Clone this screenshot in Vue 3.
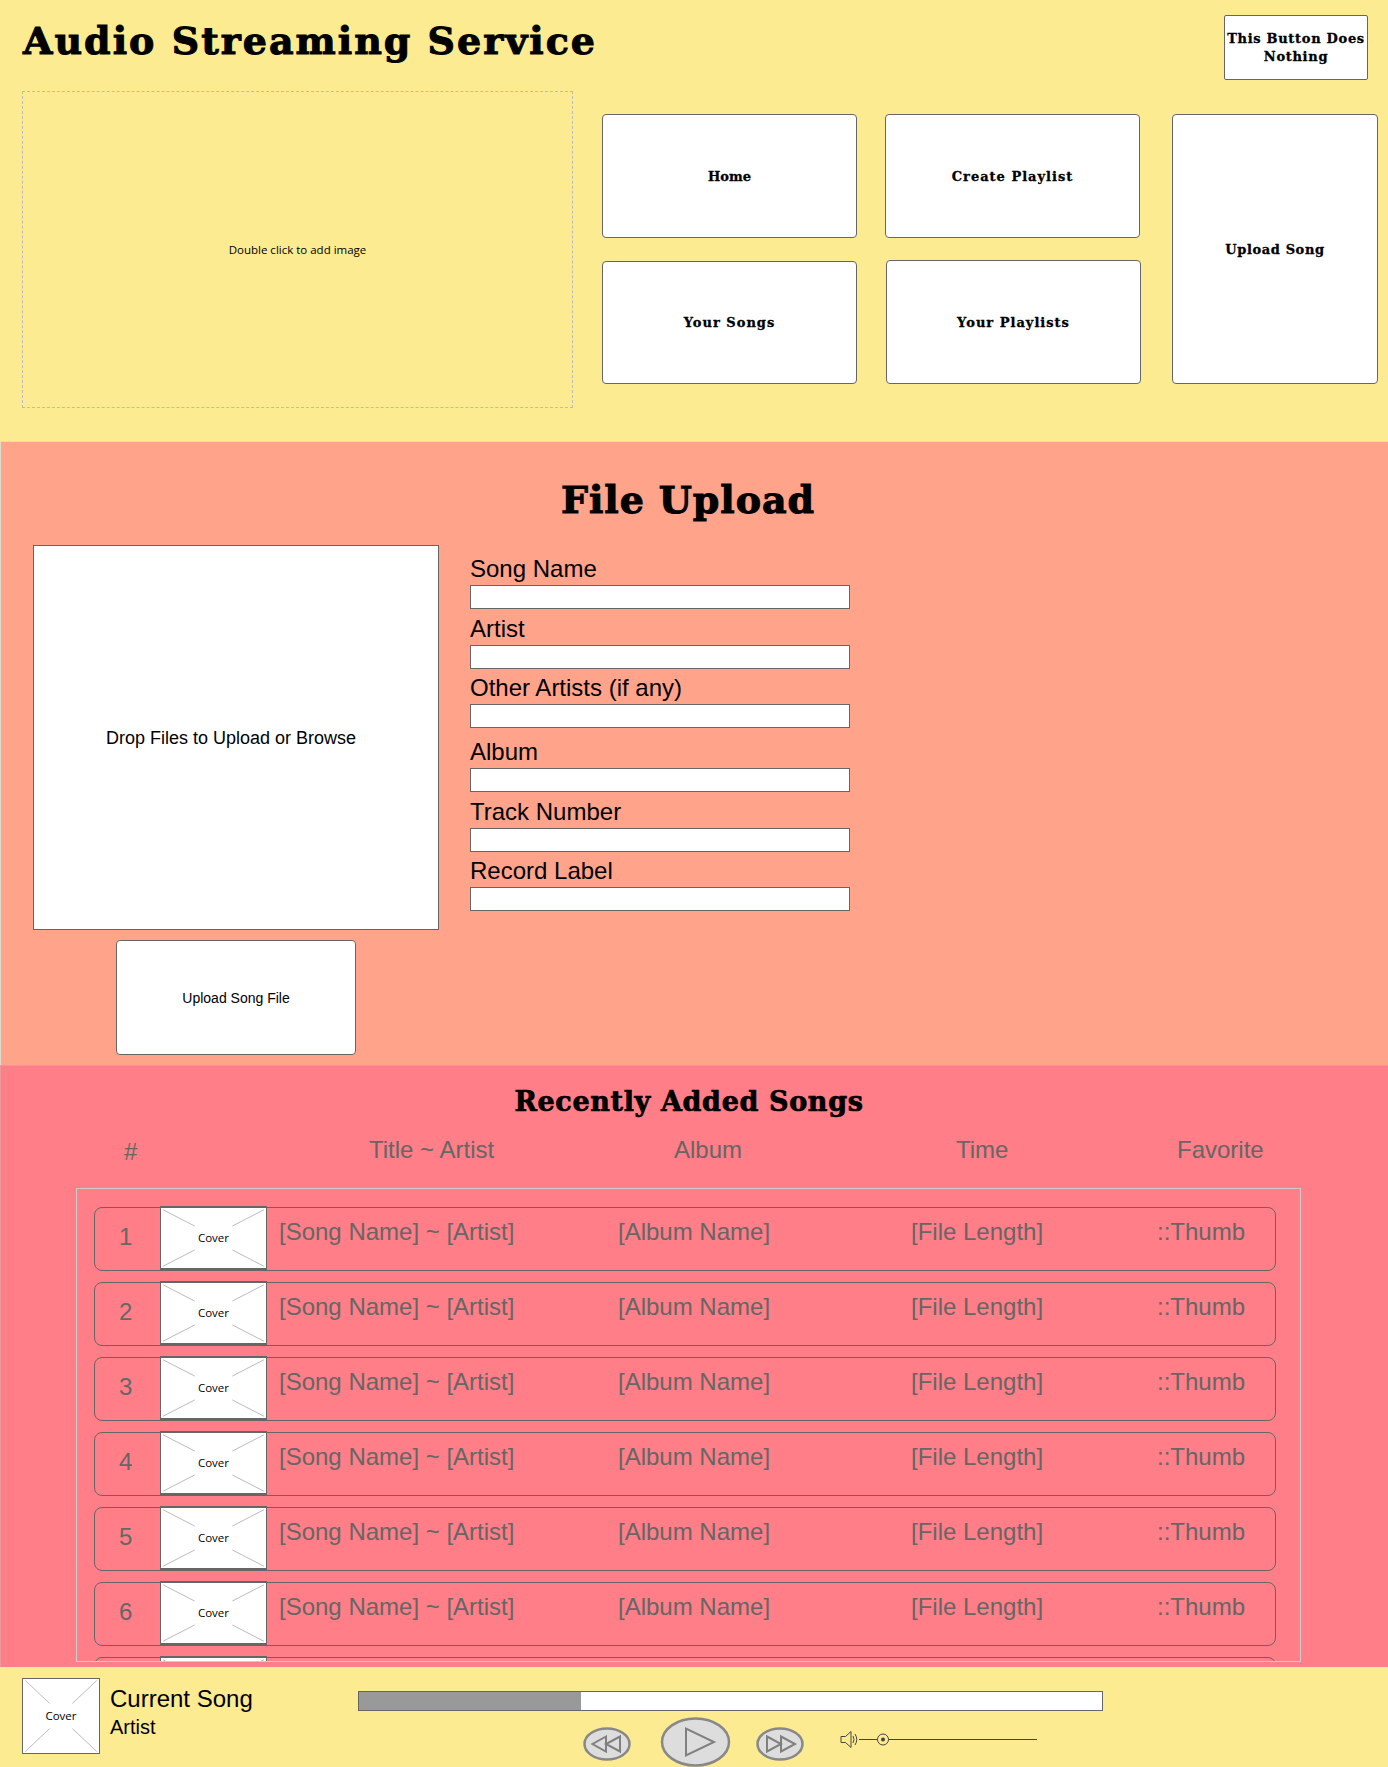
<script setup>
const navItems = [
  { label: 'Home', cls: 'nav-home' },
  { label: 'Create Playlist', cls: 'nav-create' },
  { label: 'Upload Song', cls: 'nav-upload' },
  { label: 'Your Songs', cls: 'nav-songs' },
  { label: 'Your Playlists', cls: 'nav-playlists' },
]

// gap is the space above each label, the form's rows are not evenly spaced
const fields = [
  { label: 'Song Name', gap: 10 },
  { label: 'Artist', gap: 6 },
  { label: 'Other Artists (if any)', gap: 5 },
  { label: 'Album', gap: 10 },
  { label: 'Track Number', gap: 6 },
  { label: 'Record Label', gap: 5 },
]

const rows = [1, 2, 3, 4, 5, 6, 7]
</script>

<template>
  <div class="page">
    <header class="top">
      <div class="top-bar">
        <h1 class="site-title">Audio Streaming Service</h1>
        <button class="idle-btn">This Button Does Nothing</button>
      </div>
      <div class="top-main">
        <div class="image-slot">Double click to add image</div>
        <nav class="nav-grid">
          <button v-for="item in navItems" :key="item.label" class="nav-btn" :class="item.cls">
            {{ item.label }}
          </button>
        </nav>
      </div>
    </header>

    <section class="upload">
      <h2 class="upload-title">File Upload</h2>
      <div class="upload-body">
        <div class="upload-left">
          <div class="dropzone"><span>Drop Files to Upload or Browse</span></div>
          <button class="upload-btn">Upload Song File</button>
        </div>
        <form class="upload-form">
          <div v-for="f in fields" :key="f.label" class="field" :style="{ marginTop: f.gap + 'px' }">
            <label class="field-label">{{ f.label }}</label>
            <input class="field-input" type="text" />
          </div>
        </form>
      </div>
    </section>

    <section class="recent">
      <h2 class="recent-title">Recently Added Songs</h2>
      <div class="cols">
        <span class="col-num">#</span>
        <span class="col-title">Title ~ Artist</span>
        <span class="col-album">Album</span>
        <span class="col-time">Time</span>
        <span>Favorite</span>
      </div>
      <div class="song-list">
        <div v-for="n in rows" :key="n" class="song-row">
          <span class="song-num">{{ n }}</span>
          <div class="cover song-cover">
            <svg class="cover-x" viewBox="0 0 100 100" preserveAspectRatio="none">
              <path d="M2 3L32 30M98 3L68 30M2 97L32 70M98 97L68 70" />
            </svg>
            <span>Cover</span>
          </div>
          <span class="song-text song-name">[Song Name] ~ [Artist]</span>
          <span class="song-text">[Album Name]</span>
          <span class="song-text">[File Length]</span>
          <span class="song-text">::Thumb</span>
        </div>
      </div>
    </section>

    <footer class="player">
      <div class="cover player-cover">
        <svg class="cover-x" viewBox="0 0 100 100" preserveAspectRatio="none">
          <path d="M3 2L35 33M97 2L65 33M3 98L35 67M97 98L65 67" />
        </svg>
        <span>Cover</span>
      </div>
      <div class="now-playing">
        <div class="now-song">Current Song</div>
        <div class="now-artist">Artist</div>
      </div>
      <div class="transport">
        <div class="progress"><div class="progress-fill"></div></div>
        <div class="controls">
          <svg class="ctl ctl-rew" width="48" height="34" viewBox="0 0 48 34">
            <ellipse cx="24" cy="17" rx="22.5" ry="15.5" />
            <path d="M23 9.5L9.5 17L23 24.5ZM37 9.5L23 17L37 24.5Z" />
          </svg>
          <svg class="ctl ctl-play" width="71" height="50" viewBox="0 0 71 50">
            <ellipse cx="35.5" cy="25" rx="33.5" ry="23.5" />
            <path d="M26 11.5V38.5L54 25Z" />
          </svg>
          <svg class="ctl ctl-ff" width="48" height="34" viewBox="0 0 48 34">
            <ellipse cx="24" cy="17" rx="22.5" ry="15.5" />
            <path d="M11 9.5L25 17L11 24.5ZM25 9.5L39 17L25 24.5Z" />
          </svg>
          <svg class="volume" width="198" height="24" viewBox="0 0 198 24">
            <path d="M1 8.5H5.5L11 3.5V19.5L5.5 14.5H1Z" />
            <path d="M13 8Q15 11.5 13 15M15 6Q18.5 11.5 15 17" />
            <path d="M19 11.5H197" />
            <circle class="knob" cx="43" cy="11.5" r="5.5" />
            <circle class="knob-dot" cx="43" cy="11.5" r="2" />
          </svg>
        </div>
      </div>
    </footer>
  </div>
</template>

<style>
html, body {
  margin: 0;
  overflow: hidden;
}
</style>

<style scoped>
.page {
  width: 1388px;
  height: 1767px;
  overflow: hidden;
  font-family: "Liberation Sans", Arial, sans-serif;
  color: #000;
}

button {
  background: #fff;
  border: 1px solid #666;
  border-radius: 4px;
  padding: 0;
  color: #000;
  box-sizing: border-box;
}

/* display face stand-in */
.site-title,
.upload-title,
.recent-title,
.idle-btn,
.nav-btn {
  font-family: "DejaVu Serif", serif;
  font-weight: 700;
  margin: 0;
}

/* Header */
.top {
  height: 441px;
  box-sizing: border-box;
  background: #fdeb92;
  padding-left: 22px;
}
.top-bar {
  height: 91px;
  box-sizing: border-box;
  padding: 15px 20px 0 0;
  display: flex;
  justify-content: space-between;
  align-items: flex-start;
}
.site-title {
  margin-left: 1px;
  font-size: 38px;
  line-height: 52px;
  letter-spacing: 2px;
  -webkit-text-stroke: 1px #000;
}
.idle-btn {
  width: 144px;
  height: 65px;
  border-radius: 2px;
  font-size: 13px;
  line-height: 18px;
  letter-spacing: 0.7px;
  -webkit-text-stroke: 0.3px #000;
}
.top-main {
  display: flex;
}
.image-slot {
  width: 551px;
  height: 317px;
  box-sizing: border-box;
  border: 1px dashed #bbb;
  display: flex;
  align-items: center;
  justify-content: center;
  font-family: "Open Sans", sans-serif;
  font-size: 11.5px;
}
.nav-grid {
  margin: 23px 0 0 29px;
  display: grid;
  grid-template-columns: 255px 255px 206px;
  grid-template-rows: 124px 123px;
  row-gap: 23px;
}
.nav-btn {
  font-size: 13px;
  letter-spacing: 1px;
  -webkit-text-stroke: 0.3px #000;
}
.nav-home {
  letter-spacing: 0;
}
.nav-create {
  margin-left: 28px;
  margin-right: -28px;
}
.nav-upload {
  grid-column: 3;
  grid-row: 1 / span 2;
  margin-left: 60px;
  margin-right: -60px;
  letter-spacing: 0.6px;
}
.nav-songs {
  grid-column: 1;
  grid-row: 2;
}
.nav-playlists {
  grid-column: 2;
  grid-row: 2;
  margin: -1px -29px 0 29px;
}

/* Upload */
.upload {
  height: 624px;
  box-sizing: border-box;
  background: #ffa38b;
  border: 1px solid #ddc;
  border-width: 1px 0 0 1px;
  padding-left: 32px;
}
.upload-title {
  margin: 32px 0 0 0;
  width: 1310px;
  text-align: center;
  font-size: 38px;
  line-height: 52px;
  letter-spacing: 0.9px;
  -webkit-text-stroke: 1px #000;
}
.upload-body {
  display: flex;
  margin-top: 19px;
}
.upload-left {
  width: 406px;
  display: flex;
  flex-direction: column;
  align-items: center;
}
.dropzone {
  width: 100%;
  height: 385px;
  box-sizing: border-box;
  background: #fff;
  border: 1px solid #666;
  display: flex;
  align-items: center;
  justify-content: center;
  font-size: 18px;
}
.dropzone span {
  margin: 2px 10px 0 0;
}
.upload-btn {
  width: 240px;
  height: 115px;
  margin-top: 10px;
  font-family: "Liberation Sans", Arial, sans-serif;
  font-size: 14px;
}
.upload-form {
  margin-left: 31px;
  width: 380px;
}
.field-label {
  display: block;
  font-size: 24px;
  line-height: 28px;
  margin-bottom: 2px;
}
.field-input {
  display: block;
  width: 100%;
  height: 24px;
  box-sizing: border-box;
  border: 1px solid #666;
  background: #fff;
  padding: 0;
}

/* Recently added */
.recent {
  height: 602px;
  box-sizing: border-box;
  background: #ff7e87;
  border: 1px solid #e99;
  border-width: 1px 0 0 1px;
  padding-left: 75px;
  overflow: hidden;
}
.recent-title {
  margin: 17px 0 0 0;
  width: 1226px;
  text-align: center;
  font-size: 27px;
  line-height: 38px;
  letter-spacing: 0.65px;
  -webkit-text-stroke: 0.7px #000;
}
.cols {
  display: flex;
  margin: 15px 0 0 48px;
  height: 33px;
  font-size: 24px;
  line-height: 28px;
  color: #666;
}
.col-num {
  width: 245px;
  padding-top: 2px;
}
.col-title {
  width: 305px;
}
.col-album {
  width: 282px;
}
.col-time {
  width: 221px;
}
.song-list {
  width: 1225px;
  height: 474px;
  box-sizing: border-box;
  margin-top: 19px;
  padding: 18px 0 0 17px;
  border: 1px solid #ccc;
  overflow: hidden;
}
.song-row {
  width: 1182px;
  height: 64px;
  box-sizing: border-box;
  margin-bottom: 11px;
  display: grid;
  grid-template-columns: 65px 107px 351px 293px 246px 1fr;
  align-items: start;
  border: 1px solid #666;
  border-radius: 8px;
  color: #666;
  font-size: 24px;
  line-height: 28px;
}
.song-num {
  padding: 15px 0 0 24px;
}
.song-text {
  padding-top: 10px;
}
.song-name {
  padding-left: 12px;
}
.cover {
  position: relative;
  box-sizing: border-box;
  background: #fff;
  border: 1px solid #666;
  display: flex;
  align-items: center;
  justify-content: center;
  font-family: "Open Sans", sans-serif;
  font-size: 11.5px;
  line-height: 16px;
  color: #000;
}
.cover span {
  position: relative;
}
.cover-x {
  position: absolute;
  inset: 0;
  width: 100%;
  height: 100%;
}
.cover-x path {
  fill: none;
  stroke: #bbb;
  stroke-width: 1;
  vector-effect: non-scaling-stroke;
}
.song-cover {
  width: 107px;
  height: 64px;
  margin-top: -2px;
  border-width: 2px 1px;
}

/* Player */
.player {
  height: 100px;
  box-sizing: border-box;
  background: #fdeb92;
  padding: 11px 0 0 22px;
  display: flex;
  align-items: flex-start;
}
.player-cover {
  width: 78px;
  height: 76px;
  flex: none;
}
.now-playing {
  width: 248px;
  margin-left: 10px;
  padding-top: 6px;
}
.now-song {
  font-size: 24px;
  line-height: 30px;
}
.now-artist {
  font-size: 20px;
  line-height: 26px;
}
.transport {
  width: 745px;
}
.progress {
  height: 20px;
  box-sizing: border-box;
  background: #fff;
  border: 1px solid #666;
  margin-top: 13px;
}
.progress-fill {
  width: 222px;
  height: 100%;
  background: #999;
}
.controls {
  display: flex;
  align-items: flex-start;
  margin: 6px 0 0 225px;
  width: 520px;
}
.ctl {
  flex: none;
}
.ctl ellipse {
  fill: #ddd;
  stroke: #888;
  stroke-width: 2.5;
}
.ctl path {
  fill: none;
  stroke: #808080;
  stroke-width: 2;
}
.ctl-rew,
.ctl-ff {
  margin-top: 10px;
}
.ctl-play {
  margin-left: 29px;
}
.ctl-ff {
  margin-left: 25px;
}
.volume {
  flex: none;
  margin: 11px 0 0 36px;
}
.volume path {
  fill: none;
  stroke: #444;
  stroke-width: 1;
}
.knob {
  fill: #fdeb92;
  stroke: #444;
}
.knob-dot {
  fill: #444;
}
</style>
